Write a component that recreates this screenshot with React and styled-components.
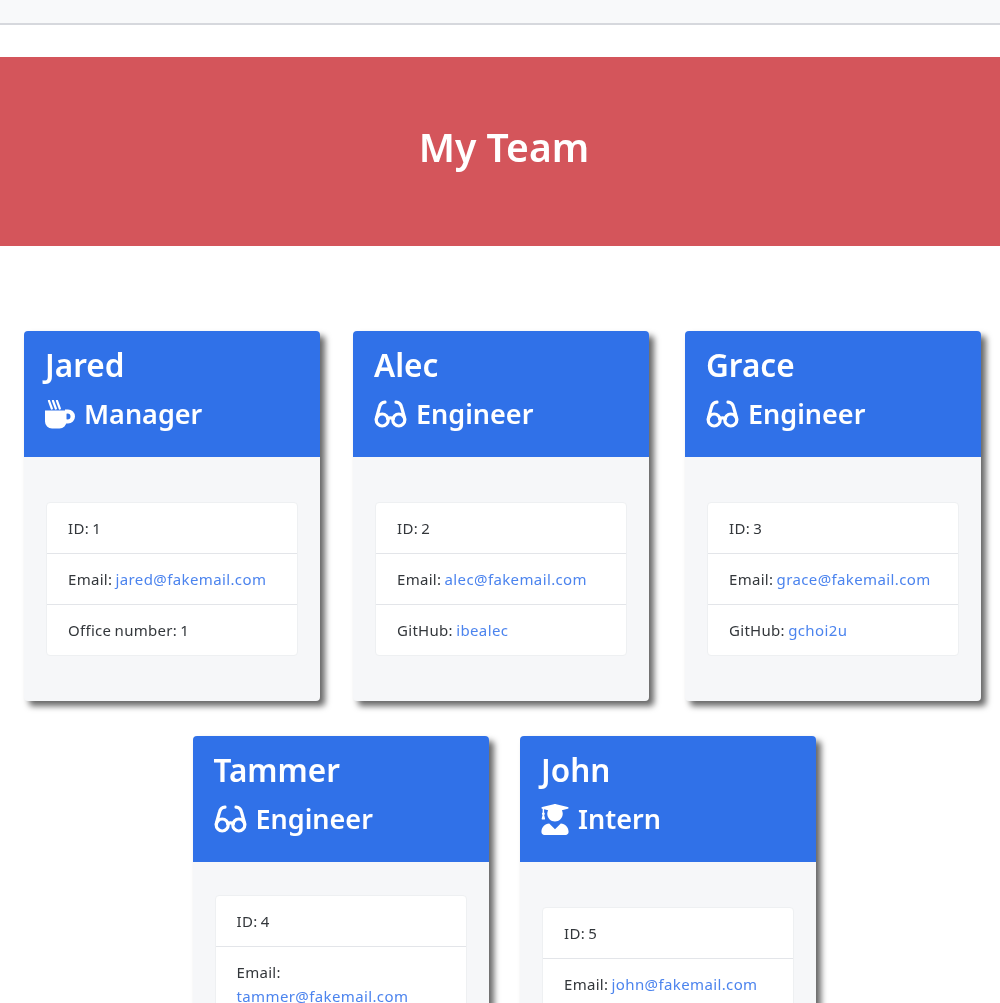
import React from "react";
import styled, { createGlobalStyle } from "styled-components";
import { FaUserGraduate } from "react-icons/fa";

const Global = createGlobalStyle`
  html, body { margin: 0; padding: 0; height: 1003px; overflow: hidden; background: #fff; }
  body { font-family: "Noto Sans", "Open Sans", sans-serif; color: #212529; }
`;
const Page = styled.div`
  filter: blur(0.45px);
`;
const TopBar = styled.div`
  height: 23px;
  background: #f8f9fa;
  border-bottom: 2px solid #d6d8dd;
`;
const Jumbo = styled.header`
  margin-top: 32px;
  height: 189px;
  background: #d4555b;
  display: flex;
  align-items: center;
  justify-content: center;
  padding: 0 0 10px 8px;
  box-sizing: border-box;
`;
const PageTitle = styled.h1`
  margin: 0;
  color: #fff;
  font-size: 39px;
  font-weight: 600;
`;
const Row = styled.section`
  display: grid;
  grid-template-columns: ${(p) => p.$cols};
  padding-left: ${(p) => p.$indent}px;
  margin-top: ${(p) => p.$top}px;
`;
const Card = styled.article`
  width: 296px;
  height: 370px;
  display: flex;
  flex-direction: column;
  border-radius: 4px;
  background: #f6f7f9;
  box-shadow: 5px 5px 6px rgba(0, 0, 0, 0.6);
`;
const CardHead = styled.div`
  height: 126px;
  box-sizing: border-box;
  background: #3071e8;
  color: #fff;
  border-radius: 4px 4px 0 0;
  padding: 12px 20px 0 21px;
`;
const Name = styled.h2`
  margin: 0;
  font-size: 31.5px;
  line-height: 44px;
  font-weight: 600;
`;
const Role = styled.h3`
  margin: 8px 0 0;
  display: flex;
  align-items: center;
  gap: 9px;
  font-size: 27px;
  line-height: 38px;
  font-weight: 600;
`;
const CardBody = styled.div`
  flex: 1;
  display: flex;
  flex-direction: column;
  justify-content: center;
  padding: 0 22px;
`;
const List = styled.ul`
  margin: 0;
  padding: 0;
  list-style: none;
  background: #fff;
  border: 1px solid #eef0f2;
  border-radius: 4px;
`;
const Item = styled.li`
  padding: 13px 21px;
  font-size: 15px;
  line-height: 24px;
  letter-spacing: 0.3px;
  word-spacing: -1px;
  color: #33373b;
  & + & { border-top: 1px solid #e3e5e9; }
`;
const Mail = styled.a`
  color: #4c84ee;
  text-decoration: none;
  letter-spacing: 0.38px;
`;
const GradIcon = styled(FaUserGraduate)`
  width: 28px;
  height: 31px;
  flex: none;
`;

const MugIcon = () => (
  <svg width="30" height="29" viewBox="0 0 30 29" fill="#fff" style={{ flex: "none" }}>
    <path d="M0 10.5h21.5v11a7 7 0 0 1-7 7h-7.5a7 7 0 0 1-7-7z" />
    <path fillRule="evenodd" d="M20 9.5h3a7 7 0 0 1 0 14h-3zM22.5 13.5a3 3 0 0 0 0 6 3 3 0 0 0 0-6z" />
    <path d="M4 0.8 6.8 8.5M8 0.8 10.8 8.5M12 0.8 14.8 8.5" stroke="#fff" strokeWidth="2.2" strokeLinecap="round" fill="none" />
  </svg>
);
const GlassesIcon = () => (
  <svg width="33" height="28" viewBox="0 0 33 28" fill="none" stroke="#fff" strokeWidth="3.2" strokeLinecap="round" style={{ flex: "none" }}>
    <circle cx="8.2" cy="20" r="6" />
    <circle cx="24.8" cy="20" r="6" />
    <path d="M13.5 18.5q3-1.4 6 0" />
    <path d="M2.2 19 5.5 7Q6.6 2.6 11 2.2" />
    <path d="M30.8 19 27.5 7Q26.4 2.6 22 2.2" />
  </svg>
);

const icons = {
  Manager: <MugIcon />,
  Engineer: <GlassesIcon />,
  Intern: <GradIcon />,
};

const team = [
  [
    { name: "Jared", role: "Manager", id: 1, email: "jared@fakemail.com", extra: "Office number: 1" },
    { name: "Alec", role: "Engineer", id: 2, email: "alec@fakemail.com", gh: "ibealec" },
    { name: "Grace", role: "Engineer", id: 3, email: "grace@fakemail.com", gh: "gchoi2u" },
  ],
  [
    { name: "Tammer", role: "Engineer", id: 4, email: "tammer@fakemail.com", gh: "tammer", wrap: true },
    { name: "John", role: "Intern", id: 5, email: "john@fakemail.com", extra: "School: UCLA" },
  ],
];

function Member({ m }) {
  return (
    <Card>
      <CardHead>
        <Name>{m.name}</Name>
        <Role>{icons[m.role]}{m.role}</Role>
      </CardHead>
      <CardBody>
        <List>
          <Item>ID: {m.id}</Item>
          <Item>Email: {m.wrap && <br />}<Mail href="#">{m.email}</Mail></Item>
          <Item>{m.extra ? m.extra : <>GitHub: <Mail href="#">{m.gh}</Mail></>}</Item>
        </List>
      </CardBody>
    </Card>
  );
}

export default function App() {
  return (
    <Page>
      <Global />
      <TopBar />
      <Jumbo><PageTitle>My Team</PageTitle></Jumbo>
      <Row $indent={24} $cols="329px 332px 296px" $top={85}>
        {team[0].map((m) => <Member key={m.id} m={m} />)}
      </Row>
      <Row $indent={192.5} $cols="327.5px 296px" $top={35}>
        {team[1].map((m) => <Member key={m.id} m={m} />)}
      </Row>
    </Page>
  );
}
